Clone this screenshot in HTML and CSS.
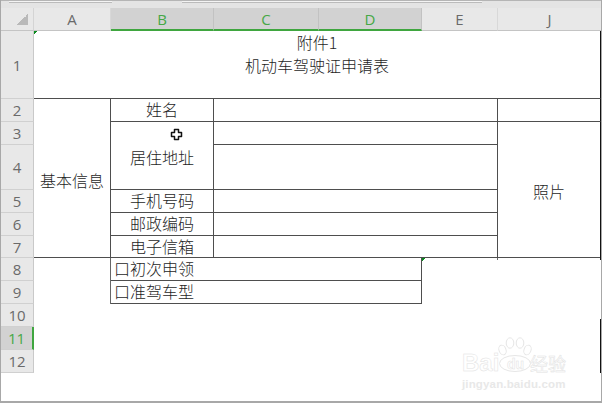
FILE: index.html
```html
<!DOCTYPE html>
<html lang="zh">
<head>
<meta charset="utf-8">
<title>机动车驾驶证申请表</title>
<link rel="stylesheet" href="styles.css">
</head>
<body>
<div class="window">
  <div class="tabs"><span class="tab tab-a"></span><span class="tab tab-b"></span></div>
  <div class="sheet">
    <div class="corner"><span class="corner-mark"></span></div>
    <div class="ch">A</div>
    <div class="ch sel">B</div>
    <div class="ch sel">C</div>
    <div class="ch sel">D</div>
    <div class="ch">E</div>
    <div class="ch last">J</div>

    <div class="rh r1">1</div>
    <div class="rh r2">2</div>
    <div class="rh r3">3</div>
    <div class="rh r4">4</div>
    <div class="rh r5">5</div>
    <div class="rh r6">6</div>
    <div class="rh r7">7</div>
    <div class="rh r8">8</div>
    <div class="rh r9">9</div>
    <div class="rh r10">10</div>
    <div class="rh r11 rsel">11</div>
    <div class="rh r12">12</div>

    <div class="cell title"><span class="tri"></span><div>附件1</div><div>机动车驾驶证申请表</div></div>
    <div class="cell basic">基本信息</div>
    <div class="cell label r2">姓名</div>
    <div class="cell val r2"></div>
    <div class="cell side r2"></div>
    <div class="cell label addr">居住地址</div>
    <div class="cell val r3"></div>
    <div class="cell val r4"></div>
    <div class="cell photo">照片</div>
    <div class="cell label r5">手机号码</div>
    <div class="cell val r5"></div>
    <div class="cell label r6">邮政编码</div>
    <div class="cell val r6"></div>
    <div class="cell label r7">电子信箱</div>
    <div class="cell val r7"></div>
    <div class="cell check r8"><span class="tri tri-end"></span>口初次申领</div>
    <div class="cell check r9">口准驾车型</div>
    <div class="tail"></div>
  </div>

  <svg class="cursor" width="13" height="13" viewBox="0 0 13 13" aria-hidden="true">
    <path d="M4.5 1.5h4v3h3v4h-3v3h-4v-3h-3v-4h3z" fill="#fff" stroke="#111" stroke-width="1.5" stroke-linejoin="round"/>
  </svg>

  <div class="watermark">
    <svg class="paw" width="38" height="36" viewBox="0 0 38 36" aria-hidden="true">
      <g fill="#fff" stroke="#e6e6e6" stroke-width="1">
        <ellipse cx="5.5" cy="13" rx="3.5" ry="5" transform="rotate(-20 5.5 13)"/>
        <ellipse cx="13" cy="6" rx="3.8" ry="5.2"/>
        <ellipse cx="23" cy="6" rx="3.8" ry="5.2"/>
        <ellipse cx="30.5" cy="13" rx="3.5" ry="5" transform="rotate(20 30.5 13)"/>
        <ellipse cx="18" cy="26.5" rx="15.5" ry="8"/>
      </g>
    </svg>
    <span class="wm-bai">Bai</span>
    <span class="wm-du">du</span>
    <span class="wm-cn">经验</span>
    <span class="wm-url">jingyan.baidu.com</span>
  </div>
</div>
</body>
</html>
```
FILE: styles.css
```css
* { box-sizing: border-box; }
html, body { margin: 0; padding: 0; background: #fff; }
.window {
  position: relative;
  width: 602px;
  height: 403px;
  overflow: hidden;
  border-left: 1px solid #a8a8a8;
  border-right: 1px solid #a8a8a8;
  border-bottom: 2px solid #a8a8a8;
  font-family: "Noto Sans CJK SC", "Liberation Serif", serif;
  color: #1e1e1e;
}
.tabs {
  display: flex;
  gap: 70px;
  height: 8px;
  background: #e4e4e4;
  border-top: 1px solid #b5b5b5;
  padding-left: 8px;
}
.tab {
  display: block;
  height: 2px;
  background: #f4f4f4;
  border-bottom: 1px solid #bbb;
}
.tab-a { width: 103px; }
.tab-b { width: 300px; }
.sheet {
  display: grid;
  grid-template-columns: 33px 77px 103px 105px 103px 76px 103px;
  grid-template-rows: 23px 68px 23px 23px 45px 23px 23px 22px 23px 23px 23px 23px 23px;
  width: 600px;
}
.corner {
  background: #e8e8e8;
  border-right: 1px solid #d4d4d4;
  border-bottom: 1px solid #c4c4c4;
  display: flex;
  align-items: flex-end;
  justify-content: flex-end;
  padding: 0 5px 5px 0;
}
.corner-mark {
  width: 11px;
  height: 11px;
  background: linear-gradient(135deg, transparent 50%, #b9b9b9 50%);
}
.ch {
  background: #e8e8e8;
  border-right: 1px solid #d8d8d8;
  border-bottom: 1px solid #c4c4c4;
  font: 15px/22px "Open Sans", "Liberation Sans", sans-serif;
  text-align: center;
  color: #6a6a6a;
}
.ch.last { border-right: 0; }
.ch.sel {
  background: #d2d2d2;
  border-right-color: #c2c2c2;
  border-bottom: 2px solid #3fa63f;
  color: #46a846;
}
.rh {
  grid-column: 1;
  background: #e8e8e8;
  border-right: 1px solid #c9c9c9;
  border-bottom: 1px solid #d0d0d0;
  font: 15px/22px "Open Sans", "Liberation Sans", sans-serif;
  color: #6a6a6a;
  display: flex;
  align-items: center;
  justify-content: center;
}
.rh.rsel {
  background: #d2d2d2;
  color: #46a846;
  border-right: 2px solid #3fa63f;
}
.r1 { grid-row: 2; }
.r2 { grid-row: 3; }
.r3 { grid-row: 4; }
.r4 { grid-row: 5; }
.r5 { grid-row: 6; }
.r6 { grid-row: 7; }
.r7 { grid-row: 8; }
.r8 { grid-row: 9; }
.r9 { grid-row: 10; }
.r10 { grid-row: 11; }
.r11 { grid-row: 12; }
.r12 { grid-row: 13; }
.cell {
  position: relative;
  font-size: 16px;
  font-weight: 300;
  line-height: 22px;
  display: flex;
  align-items: center;
  justify-content: center;
  padding-bottom: 2px;
  white-space: nowrap;
  border-bottom: 1px solid #4e4e4e;
  border-right: 1px solid #4e4e4e;
}
.title {
  grid-column: 2 / 8;
  grid-row: 2;
  flex-direction: column;
  justify-content: flex-start;
  line-height: 23px;
  border-right: 1px solid #111;
}
.basic { grid-column: 2; grid-row: 3 / 9; padding: 3px 0 0; }
.label { grid-column: 3; }
.addr { grid-row: 4 / 6; padding: 2px 0 0; }
.val { grid-column: 4 / 7; }
.side { grid-column: 7; border-right: 1px solid #111; }
.photo { grid-column: 7; grid-row: 4 / 9; border-right: 1px solid #111; padding: 2px 0 0; }
.photo::before, .photo::after {
  content: "";
  position: absolute;
  top: 100%;
  width: 1px;
  height: 3px;
}
.photo::before { left: -1px; background: #6a6a6a; }
.photo::after { right: -1px; background: #111; }
.check {
  grid-column: 3 / 6;
  justify-content: flex-start;
  padding-left: 3px;
  box-shadow: -1px 0 0 #666;
}
.tail {
  grid-column: 7;
  grid-row: 11 / 14;
  margin-top: 15px;
  border-right: 1px solid #111;
}
.tri {
  position: absolute;
  left: 0;
  top: 0;
  width: 4px;
  height: 4px;
  background: linear-gradient(135deg, #0a8a1f 50%, transparent 50%);
}
.tri-end { left: auto; right: -5px; top: 0; }
.cursor { position: absolute; left: 169px; top: 128px; }
.watermark {
  position: absolute;
  left: 461px;
  top: 336px;
  width: 112px;
  height: 58px;
}
.paw { position: absolute; left: 35px; top: 1px; }
.watermark span { position: absolute; white-space: nowrap; }
.wm-bai, .wm-du, .wm-cn {
  color: #fff;
  -webkit-text-stroke: 0.5px #e2e2e2;
  font-family: "Liberation Sans", sans-serif;
  font-weight: 700;
}
.wm-bai { left: 0; top: 15px; font-size: 24px; line-height: 24px; }
.wm-du { left: 45px; top: 21px; font-size: 14px; line-height: 14px; }
.wm-cn { left: 68px; top: 15px; font-size: 18px; line-height: 24px; font-family: "Noto Sans CJK SC", sans-serif; font-weight: 400; }
.wm-url { left: 0; top: 41px; font: 700 11.5px/14px "Liberation Sans", sans-serif; color: #e8e8e8; letter-spacing: .15px; }
```
